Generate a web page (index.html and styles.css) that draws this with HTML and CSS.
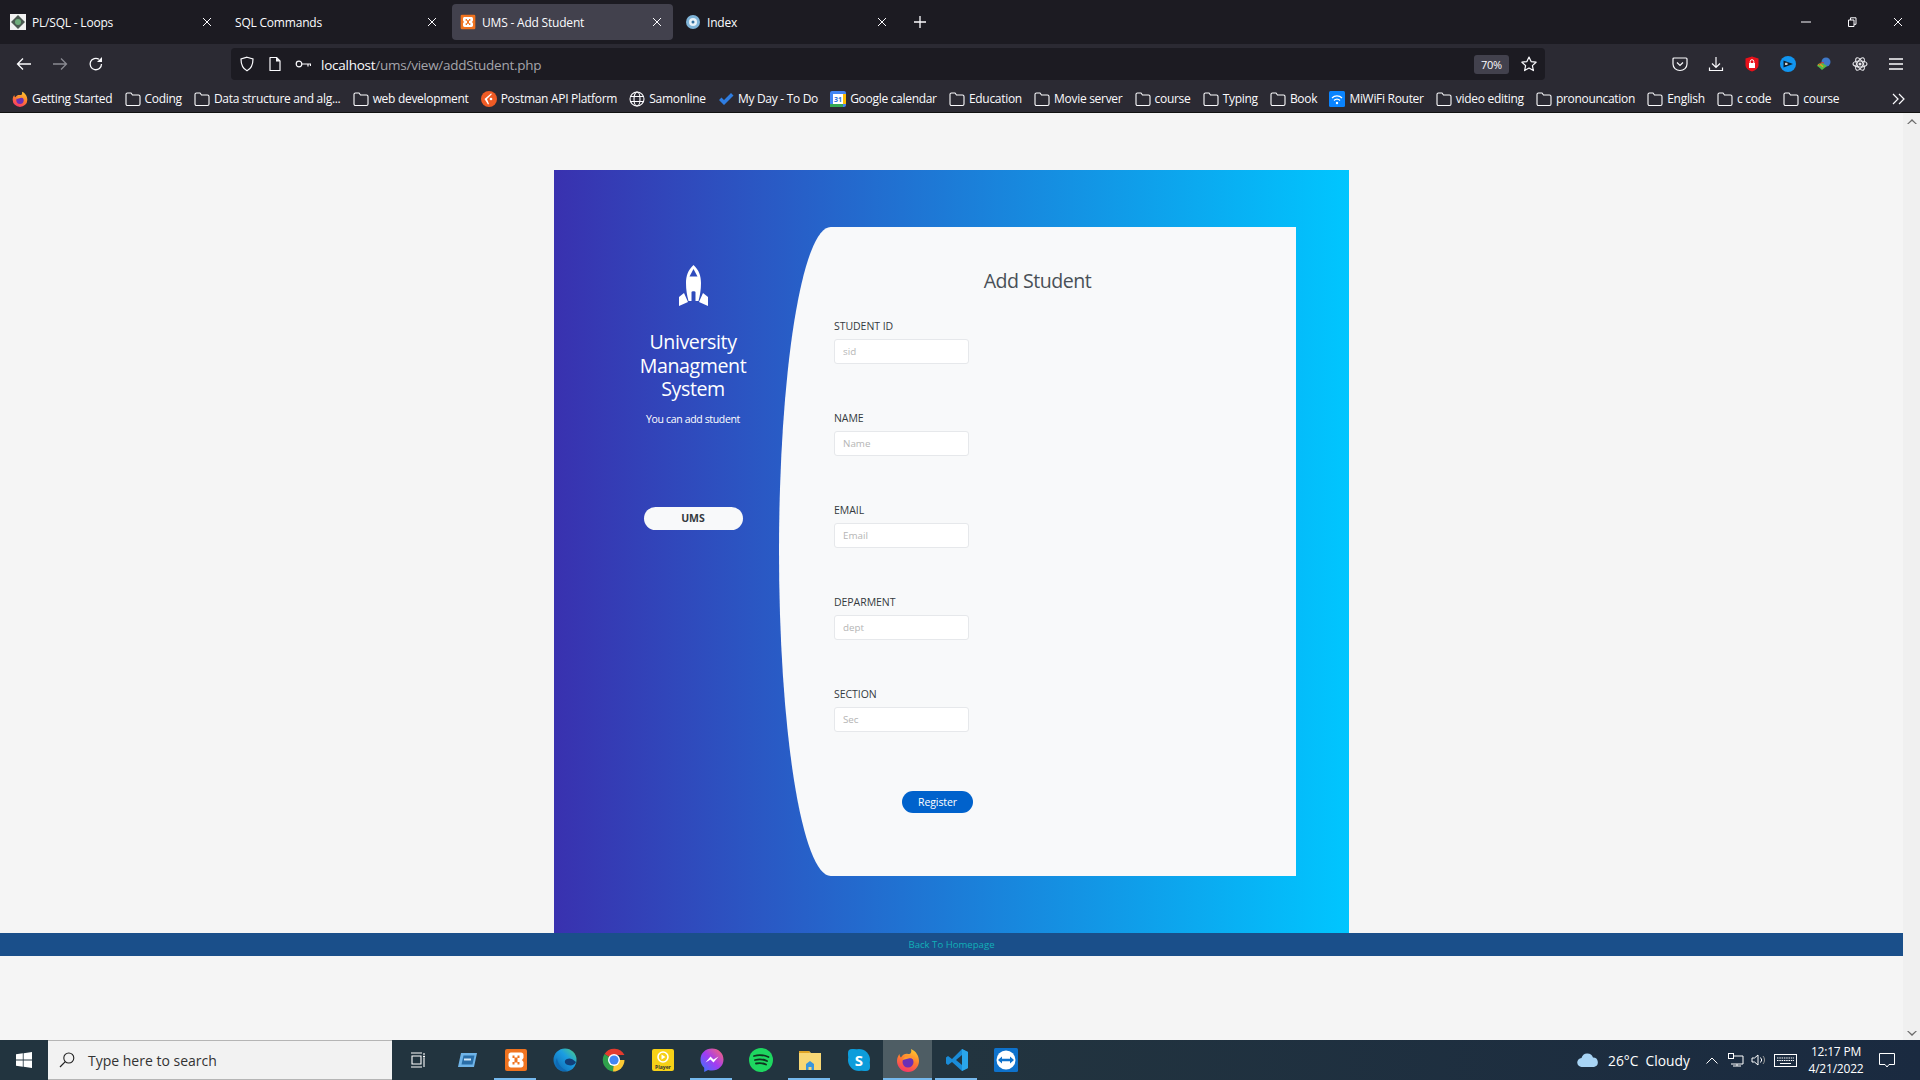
FILE: index.html
```html
<!DOCTYPE html>
<html lang="en">
<head>
    <title>UMS - Add Student</title>
    <link rel="stylesheet" href="styles.css">
</head>
<body>
    <svg class="sprite" width="0" height="0">
        <defs>
            <linearGradient id="gradMsg" x1="0" y1="1" x2="1" y2="0"><stop offset="0" stop-color="#2e7bff"/><stop offset=".5" stop-color="#a33bf2"/><stop offset="1" stop-color="#ff6a6a"/></linearGradient>
            <linearGradient id="gradEdge" x1="0" y1="1" x2="1" y2="0"><stop offset="0" stop-color="#0c5fa8"/><stop offset=".6" stop-color="#1b9de2"/><stop offset="1" stop-color="#52d17c"/></linearGradient>
            <linearGradient id="gradFox" x1=".7" y1="0" x2=".3" y2="1"><stop offset="0" stop-color="#ffc82e"/><stop offset=".5" stop-color="#ff7a30"/><stop offset="1" stop-color="#f5336b"/></linearGradient>
            <symbol id="folder" viewBox="0 0 16 16"><path d="M1 13V3.500C1 2.700 1.600 2 2.500 2H6l1.500 2h6c.8 0 1.500.7 1.500 1.500V13c0 .8-.7 1.500-1.500 1.500h-11C1.600 14.500 1 13.800 1 13z" fill="none" stroke="#fbfbfe" stroke-width="1.100"/></symbol>
            <symbol id="close" viewBox="0 0 10 10"><path d="M1 1l8 8M9 1l-8 8" stroke="#fbfbfe" stroke-width="1" fill="none"/></symbol>
            <symbol id="fox" viewBox="0 0 24 24"><path d="M15 1c5 2 8 7 8 12a11 11 0 1 1-22 0c0-3 1-5 2.500-7 0 2 .8 3 1.500 3.500C7 6 10 5.500 12 6c2 .5 4-1 3-5z" fill="url(#gradFox)"/><circle cx="12" cy="14" r="5.500" fill="#6b2fb5"/><path d="M6.500 12c1-3 4-4.500 7-4 2.500.5 4 2 4.500 4-2-2-4-2-5.500-1.500-2 .5-4 1-6 1.500z" fill="#ff9a2e"/></symbol>
            <symbol id="xampp" viewBox="0 0 24 24"><rect x="1" y="1" width="22" height="22" rx="2" fill="#f0731f"/><path d="M7 4.500h10c1.500 0 2.500 1 2.500 2.500v2.500c0 1-.8 1.800-1.800 2.500.9.700 1.800 1.500 1.800 2.500V17c0 1.500-1 2.500-2.500 2.500H7c-1.500 0-2.500-1-2.500-2.500v-2.500c0-1 .9-1.800 1.800-2.500-1-.7-1.800-1.500-1.800-2.500V7c0-1.500 1-2.500 2.500-2.500z" fill="#fff"/><path d="M8.500 7.500h2v2h3v-2h2v2.500h-2v4h2v2.500h-2v-2h-3v2h-2V14h2v-4h-2z" fill="#f0731f"/></symbol>
        </defs>
    </svg>

    <header class="browser">
        <div class="tabs">
            <div class="tab">
                <svg class="fav" viewBox="0 0 16 16"><rect width="16" height="16" fill="#f2f2f2"/><path d="M8 1l7 7-7 7-7-7z" fill="#4c5a52"/><circle cx="8" cy="8" r="3" fill="#6fae7c"/></svg>
                <span class="tabName">PL/SQL - Loops</span>
                <svg class="tabClose"><use href="#close"/></svg>
            </div>
            <div class="tab noIcon">
                <span class="tabName">SQL Commands</span>
                <svg class="tabClose"><use href="#close"/></svg>
            </div>
            <div class="tab active">
                <svg class="fav"><use href="#xampp"/></svg>
                <span class="tabName">UMS - Add Student</span>
                <svg class="tabClose"><use href="#close"/></svg>
            </div>
            <div class="tab">
                <svg class="fav" viewBox="0 0 16 16"><circle cx="8" cy="8" r="7" fill="#7fb4d8"/><circle cx="8" cy="8" r="4" fill="#e8f2f8"/><circle cx="8" cy="8" r="1.500" fill="#2f6f9f"/></svg>
                <span class="tabName">Index</span>
                <svg class="tabClose"><use href="#close"/></svg>
            </div>
            <svg class="newTab" viewBox="0 0 12 12"><path d="M6 0v12M0 6h12" stroke="#fbfbfe" stroke-width="1.300"/></svg>
            <div class="winBtns">
                <svg viewBox="0 0 10 10"><path d="M0 5h10" stroke="#fbfbfe"/></svg>
                <svg viewBox="0 0 10 10"><path d="M1.500 3h5.500v6.500H1.500zM3.500 3V.8H9v6.500H7" fill="none" stroke="#fbfbfe"/></svg>
                <svg viewBox="0 0 10 10"><use href="#close"/></svg>
            </div>
        </div>

        <div class="toolbar">
            <svg class="navIcon" viewBox="0 0 16 16"><path d="M15 8H1.500M7 2.500L1.500 8 7 13.500" fill="none" stroke="#fbfbfe" stroke-width="1.300"/></svg>
            <svg class="navIcon dim" viewBox="0 0 16 16"><path d="M1 8h13.500M9 2.500L14.500 8 9 13.500" fill="none" stroke="#8a8a92" stroke-width="1.300"/></svg>
            <svg class="navIcon" viewBox="0 0 16 16"><path d="M13.500 8A5.700 5.700 0 1 1 11 3.300" fill="none" stroke="#fbfbfe" stroke-width="1.300"/><path d="M14 1v5H9z" fill="#fbfbfe"/></svg>
            <div class="urlbar">
                <svg class="urlIcon" viewBox="0 0 16 16"><path d="M8 1.200l6 1.800c0 6-1.500 9.500-6 11.800C3.500 12.500 2 9 2 3z" fill="none" stroke="#fbfbfe" stroke-width="1.200"/></svg>
                <svg class="urlIcon" viewBox="0 0 16 16"><path d="M3 1.500h6.500L13 5v9.500H3z" fill="none" stroke="#fbfbfe" stroke-width="1.200" stroke-linejoin="round"/><path d="M9 1.500V5.500h4" fill="#fbfbfe"/></svg>
                <svg class="urlIcon" viewBox="0 0 16 16"><circle cx="4" cy="8" r="2.800" fill="none" stroke="#fbfbfe" stroke-width="1.200"/><path d="M7 8h9M13 8v2.500M15.500 8v2" stroke="#fbfbfe" stroke-width="1.200"/></svg>
                <span class="url">localhost<span class="urlPath">/ums/view/addStudent.php</span></span>
                <span class="zoomPill">70%</span>
                <svg class="star" viewBox="0 0 16 16"><path d="M8 1l2.100 4.600 5 .6-3.700 3.400 1 5L8 12.100l-4.400 2.500 1-5L.9 6.200l5-.6z" fill="none" stroke="#fbfbfe" stroke-width="1.200" stroke-linejoin="round"/></svg>
            </div>
            <div class="addons">
                <svg viewBox="0 0 16 16"><path d="M2 2h12c.6 0 1 .4 1 1v5c0 3.500-3 6.500-7 6.500S1 11.500 1 8V3c0-.6.4-1 1-1z" fill="none" stroke="#fbfbfe" stroke-width="1.200"/><path d="M5 6.500l3 3 3-3" fill="none" stroke="#fbfbfe" stroke-width="1.200"/></svg>
                <svg viewBox="0 0 16 16"><path d="M8 1v10M4 7.500L8 11.500l4-4M1.500 11.500v3h13v-3" fill="none" stroke="#fbfbfe" stroke-width="1.200"/></svg>
                <svg viewBox="0 0 16 16"><path d="M8 .5l6.500 2V9c0 3-3 5.500-6.500 6.500C4.500 14.500 1.500 12 1.500 9V2.500z" fill="#e8111a"/><rect x="5" y="7" width="6" height="5" fill="#fff"/><path d="M6.200 7V5.500a1.800 1.800 0 0 1 3.600 0V7" fill="none" stroke="#fff"/></svg>
                <svg viewBox="0 0 16 16"><circle cx="8" cy="8" r="8" fill="#1195f0"/><path d="M3.500 4.500L13 8l-9.500 3.500z" fill="#10212e"/><rect x="5" y="6.800" width="2.500" height="2.200" fill="#ccc"/></svg>
                <svg viewBox="0 0 16 16"><circle cx="10" cy="6" r="4.500" fill="#3f79c9"/><path d="M1 10c2-4 5-4 7-2l3 2-5 4c-2-2-3-3-5-4z" fill="#54b948"/><path d="M2 9c2-1 4 0 5 2" fill="none" stroke="#e8a21a" stroke-width="1.300"/><path d="M8 7c-2-1-4 0-5 2" fill="none" stroke="#e2332b"/></svg>
                <svg viewBox="0 0 16 16"><g fill="none" stroke="#e4e4e8" stroke-width="1.200"><ellipse cx="8" cy="8" rx="7" ry="3"/><ellipse cx="8" cy="8" rx="7" ry="3" transform="rotate(60 8 8)"/><ellipse cx="8" cy="8" rx="7" ry="3" transform="rotate(120 8 8)"/></g><circle cx="8" cy="8" r="1.500" fill="#e4e4e8"/></svg>
                <svg viewBox="0 0 16 16"><path d="M1 3h14M1 8h14M1 13h14" stroke="#fbfbfe" stroke-width="1.400"/></svg>
            </div>
        </div>

        <nav class="bookmarks">
            <a class="mark"><svg><use href="#fox"/></svg>Getting Started</a>
            <a class="mark"><svg><use href="#folder"/></svg>Coding</a>
            <a class="mark"><svg><use href="#folder"/></svg>Data structure and alg...</a>
            <a class="mark"><svg><use href="#folder"/></svg>web development</a>
            <a class="mark"><svg viewBox="0 0 16 16"><circle cx="8" cy="8" r="8" fill="#ef5b25"/><path d="M11 3L6 8l2 5-1 .5L3.500 8 10 2.500z" fill="#fff"/><circle cx="10" cy="8" r="1.300" fill="#fff"/></svg>Postman API Platform</a>
            <a class="mark"><svg viewBox="0 0 16 16"><g fill="none" stroke="#fbfbfe" stroke-width="1.100"><circle cx="8" cy="8" r="7"/><ellipse cx="8" cy="8" rx="3" ry="7"/><path d="M1.500 5.500h13M1.500 10.500h13"/></g></svg>Samonline</a>
            <a class="mark"><svg viewBox="0 0 16 16"><path d="M1 9l2.500-2.500L6 9l7-7 2.500 2.500L6 14z" fill="#2f7de1"/></svg>My Day - To Do</a>
            <a class="mark"><svg viewBox="0 0 16 16"><rect width="16" height="16" rx="2" fill="#4285f4"/><rect x="3" y="3" width="10" height="10" fill="#fff"/><rect y="13" width="13" height="3" fill="#34a853"/><rect x="13" y="3" width="3" height="10" fill="#fbbc04"/><text x="8" y="11" class="calNum">31</text></svg>Google calendar</a>
            <a class="mark"><svg><use href="#folder"/></svg>Education</a>
            <a class="mark"><svg><use href="#folder"/></svg>Movie server</a>
            <a class="mark"><svg><use href="#folder"/></svg>course</a>
            <a class="mark"><svg><use href="#folder"/></svg>Typing</a>
            <a class="mark"><svg><use href="#folder"/></svg>Book</a>
            <a class="mark"><svg viewBox="0 0 16 16"><rect width="16" height="16" rx="1.500" fill="#0a84ff"/><path d="M3 7a7 7 0 0 1 10 0M5 9.500a4 4 0 0 1 6 0" fill="none" stroke="#fff" stroke-width="1.200"/><circle cx="8" cy="12" r="1.200" fill="#fff"/></svg>MiWiFi Router</a>
            <a class="mark"><svg><use href="#folder"/></svg>video editing</a>
            <a class="mark"><svg><use href="#folder"/></svg>pronouncation</a>
            <a class="mark"><svg><use href="#folder"/></svg>English</a>
            <a class="mark"><svg><use href="#folder"/></svg>c code</a>
            <a class="mark"><svg><use href="#folder"/></svg>course</a>
            <svg class="more" viewBox="0 0 14 12"><path d="M1 1l5 5-5 5M7 1l5 5-5 5" fill="none" stroke="#fbfbfe" stroke-width="1.200"/></svg>
        </nav>
    </header>

    <div class="viewport">
        <main class="page">
            <section class="panel">
                <aside class="intro">
                    <svg class="rocket" viewBox="0 0 29 41"><path fill-rule="evenodd" d="M14.500 0C9 5 7 11 7 18c0 7 1 12 2.500 18h3V27c0-1 4-1 4 0v9h3C21 30 22 25 22 18c0-7-2-13-7.500-18zM14.500 4l-4 7.500h8z" fill="#fff"/><path d="M5 28l-5 4v9l9-4zM24 28l5 4v9l-9-4z" fill="#fff"/></svg>
                    <h3 class="introTitle">University Managment System</h3>
                    <p class="introText">You can add student</p>
                    <a class="umsBtn">UMS</a>
                </aside>
                <div class="card">
                    <h3 class="cardTitle">Add Student</h3>
                    <form class="studentForm">
                        <div class="field">
                            <label>STUDENT ID</label>
                            <input type="text" placeholder="sid">
                        </div>
                        <div class="field">
                            <label>NAME</label>
                            <input type="text" placeholder="Name">
                        </div>
                        <div class="field">
                            <label>EMAIL</label>
                            <input type="text" placeholder="Email">
                        </div>
                        <div class="field">
                            <label>DEPARMENT</label>
                            <input type="text" placeholder="dept">
                        </div>
                        <div class="field">
                            <label>SECTION</label>
                            <input type="text" placeholder="Sec">
                        </div>
                        <button class="registerBtn" type="button">Register</button>
                    </form>
                </div>
            </section>
            <footer class="backBar"><a>Back To Homepage</a></footer>
        </main>
        <div class="scrollbar">
            <svg viewBox="0 0 10 6"><path d="M0 6l5-5 5 5-1.500 0L5 3 1.500 6z" fill="#6b6b6b"/></svg>
            <svg viewBox="0 0 10 6"><path d="M0 0l5 5 5-5-1.500 0L5 3 1.500 0z" fill="#6b6b6b"/></svg>
        </div>
    </div>

    <div class="taskbar">
        <svg class="winLogo" viewBox="0 0 16 16"><path d="M0 2.300l6.800-1v6.300H0zM7.600 1.200L16 0v7.600H7.600zM0 8.400h6.800v6.300l-6.800-1zM7.600 8.400H16V16l-8.400-1.200z" fill="#fff"/></svg>
        <div class="searchBox">
            <svg viewBox="0 0 16 16"><circle cx="9.800" cy="6" r="5" fill="none" stroke="#222" stroke-width="1.100"/><path d="M6.300 9.700L1 15" stroke="#222" stroke-width="1.200"/></svg>
            <span>Type here to search</span>
        </div>
        <div class="taskIcons">
            <div class="taskIcon"><svg class="small" viewBox="0 0 16 16"><path d="M1 1h11M1 15h11M2 4h9v8H2zM14 1v2M14 6v9" fill="none" stroke="#fff" stroke-width="1.100"/><rect x="13" y="3.800" width="2" height="1.600" fill="#fff"/></svg></div>
            <div class="taskIcon"><svg viewBox="0 0 24 24"><path d="M6 5h16l-3 14H3z" fill="#6fb4e8"/><path d="M8.500 7.500h11l-2 9h-11z" fill="#2a6ea8"/><rect x="9" y="10.500" width="7" height="2" fill="#cfe6f7"/></svg></div>
            <div class="taskIcon running"><svg><use href="#xampp"/></svg></div>
            <div class="taskIcon"><svg viewBox="0 0 24 24"><circle cx="12" cy="12" r="11.500" fill="url(#gradEdge)"/><path d="M23 14c-1 3-5 4-8 3-4-1-4-5-1-6 2-1 5-1 9 3z" fill="#123f78"/><path d="M9 23c-5-2-8-8-5-13 1 7 5 10 10 13z" fill="#0f6ab4"/></svg></div>
            <div class="taskIcon"><svg viewBox="0 0 24 24"><path d="M12 12L2.500 6A11.500 11.500 0 0 1 22.500 7H12z" fill="#e33b2e"/><path d="M12 12l-1 11.500A11.500 11.500 0 0 1 2.500 6z" fill="#2fa14c"/><path d="M12 12h10.500A11.500 11.500 0 0 1 11 23.500z" fill="#fcc934"/><circle cx="12" cy="12" r="6" fill="#fff"/><circle cx="12" cy="12" r="4.600" fill="#4285f4"/></svg></div>
            <div class="taskIcon"><svg viewBox="0 0 24 24"><rect x="1" y="1" width="22" height="22" rx="2" fill="#f7d117"/><circle cx="12" cy="9" r="5" fill="none" stroke="#fff" stroke-width="1.600"/><path d="M10.500 6.500l4 2.500-4 2.500z" fill="#fff"/><text x="12" y="20.500" class="playerText">Player</text></svg></div>
            <div class="taskIcon running"><svg viewBox="0 0 24 24"><path d="M12 .5C5.500.5.500 5.200.500 11.500c0 3.300 1.400 6.200 3.700 8.200V24l3.900-2.100c1.200.4 2.500.6 3.900.6 6.500 0 11.500-4.700 11.500-11S18.500.5 12 .5z" fill="url(#gradMsg)"/><path d="M5.500 14.500l5-6 3 3 5-3-5 6-3-3z" fill="#fff"/></svg></div>
            <div class="taskIcon"><svg viewBox="0 0 24 24"><circle cx="12" cy="12" r="12" fill="#1ed760"/><path d="M5 8c5-1.500 10-1 14.500 1M6 12c4-1 8.500-.7 12 1M7 15.500c3.500-.8 7-.5 10 1" fill="none" stroke="#10331f" stroke-width="1.800" stroke-linecap="round"/></svg></div>
            <div class="taskIcon running"><svg viewBox="0 0 24 24"><path d="M1 3h10l2 2h10v17H1z" fill="#f8d775"/><path d="M1 3h10l1 2H1z" fill="#e0a526"/><path d="M8 22v-6l4-3 4 3v6h-2.500v-3h-3v3z" fill="#3a96dd"/></svg></div>
            <div class="taskIcon"><svg viewBox="0 0 24 24"><circle cx="12" cy="12" r="11" fill="#0d9ddb"/><rect x="1" y="1" width="10" height="10" rx="4" fill="#0d9ddb"/><rect x="13" y="13" width="10" height="10" rx="4" fill="#0d9ddb"/><text x="12" y="18" class="skypeText">S</text></svg></div>
            <div class="taskIcon running active"><svg><use href="#fox"/></svg></div>
            <div class="taskIcon running"><svg viewBox="0 0 24 24"><path d="M17 1l6 3v16l-6 3-10-9-4 3-2-1.500V9.500L3 8l4 3z" fill="#1a8cd8"/><path d="M17 7l-6 5 6 5z" fill="#22343f"/><path d="M17 1l6 3v16l-6 3z" fill="#2aa5ea"/></svg></div>
            <div class="taskIcon"><svg viewBox="0 0 24 24"><rect width="24" height="24" rx="1.500" fill="#0e72cc"/><circle cx="12" cy="12" r="9.500" fill="#fff"/><path d="M4 12l4-3.500v2.300h8V8.500l4 3.500-4 3.500v-2.300H8v2.300z" fill="#0e72cc"/></svg></div>
        </div>
        <div class="tray">
            <svg class="cloud" viewBox="0 0 22 14"><path d="M5 14a4.500 4.500 0 0 1-.5-9A6 6 0 0 1 16 4.500 4.800 4.800 0 0 1 17 14z" fill="#a8d4f5"/></svg>
            <span class="weather">26°C&nbsp; Cloudy</span>
            <svg class="trayIcon caret" viewBox="0 0 12 7"><path d="M.5 6.500L6 1l5.500 5.500" fill="none" stroke="#fff"/></svg>
            <svg class="trayIcon net" viewBox="0 0 16 14"><path d="M3 3h12v8H3M9 11v2M5 13h8" fill="none" stroke="#fff"/><rect x=".5" y=".5" width="5" height="5" fill="#1a2a40" stroke="#fff"/></svg>
            <svg class="trayIcon vol" viewBox="0 0 16 14"><path d="M1 5h2.500L7 2v10L3.500 9H1z" fill="none" stroke="#fff"/><path d="M9.500 4.500a3.500 3.500 0 0 1 0 5" fill="none" stroke="#fff"/><path d="M12 3a6 6 0 0 1 0 8" fill="none" stroke="#999"/></svg>
            <svg class="trayIcon kbd" viewBox="0 0 23 13"><rect x=".5" y=".5" width="22" height="12" fill="none" stroke="#fff"/><path d="M3 4h17M3 6.500h17" stroke="#fff" stroke-dasharray="1.500 .8"/><path d="M6 9.500h11" stroke="#fff"/></svg>
            <div class="clock"><span>12:17 PM</span><span>4/21/2022</span></div>
            <svg class="trayIcon notify" viewBox="0 0 16 15"><path d="M.5.500h15v11H10l-2 2.500-2-2.500H.5z" fill="none" stroke="#fff"/></svg>
        </div>
    </div>
</body>
</html>
```

FILE: styles.css
```css
* {
    box-sizing: border-box;
}

body {
    margin: 0;
    height: 100vh;
    display: flex;
    flex-direction: column;
    overflow: hidden;
    background: #f5f5f5;
    font-family: "Open Sans", "Noto Sans", sans-serif;
}

.sprite {
    display: block;
    flex: none;
}

/* browser chrome */
.browser {
    flex: none;
    color: #fbfbfe;
    font-size: 12px;
    letter-spacing: -0.3px;
}

.tabs {
    height: 44px;
    background: #1c1b22;
    display: flex;
    align-items: center;
    padding-left: 2px;
    gap: 4px;
}

.tab {
    width: 221px;
    height: 36px;
    border-radius: 4px;
    display: flex;
    align-items: center;
    padding: 0 11px 0 8px;
    gap: 6px;
    letter-spacing: -0.2px;
}

.tab.active {
    background: #42414d;
}

.fav {
    width: 16px;
    height: 16px;
    flex: none;
}

.tabName {
    flex: 1;
    white-space: nowrap;
}

.tabClose {
    width: 10px;
    height: 10px;
    flex: none;
}

.newTab {
    width: 12px;
    height: 12px;
    margin-left: 12px;
}

.winBtns {
    margin-left: auto;
    display: flex;
    gap: 36px;
    padding-right: 17px;
}

.winBtns svg {
    width: 10px;
    height: 10px;
}

.toolbar {
    height: 44px;
    background: #2b2a33;
    display: flex;
    align-items: center;
    padding: 0 0 4px 16px;
}

.navIcon {
    width: 16px;
    height: 16px;
    margin-right: 20px;
}

.urlbar {
    width: 1314px;
    height: 32px;
    margin-left: 107px;
    background: #1c1b22;
    border-radius: 4px;
    display: flex;
    align-items: center;
    padding-left: 8px;
    font-size: 13.5px;
    letter-spacing: -0.25px;
}

.urlIcon {
    width: 16px;
    height: 16px;
    margin-right: 12px;
}

.url {
    margin-left: -2px;
    padding-top: 1px;
    flex: 1;
}

.urlPath {
    color: #a5a5ab;
}

.zoomPill {
    width: 35px;
    height: 19px;
    border-radius: 3px;
    background: #42414d;
    font-size: 11px;
    text-align: center;
    line-height: 19px;
}

.star {
    width: 16px;
    height: 16px;
    margin: 0 8px 0 12px;
}

.addons {
    display: flex;
    margin-left: 127px;
    gap: 20px;
}

.addons svg {
    width: 16px;
    height: 16px;
}

.bookmarks {
    height: 25px;
    background: #2b2a33;
    border-bottom: 1px solid #111;
    display: flex;
    align-items: center;
    padding: 0 14px 3px 12px;
    gap: 12.2px;
}

.mark {
    display: flex;
    align-items: center;
    gap: 4px;
    white-space: nowrap;
}

.mark svg {
    width: 16px;
    height: 16px;
    flex: none;
}

.calNum {
    font-size: 7px;
    font-weight: 700;
    fill: #2a6fdb;
    text-anchor: middle;
    letter-spacing: 0;
}

.more {
    width: 14px;
    height: 12px;
    margin-left: auto;
}

/* page */
.viewport {
    flex: 1;
    display: flex;
    min-height: 0;
}

.page {
    flex: 1;
    padding-top: 57px;
}

.scrollbar {
    width: 17px;
    background: #f0f0f0;
    display: flex;
    flex-direction: column;
    justify-content: space-between;
    align-items: center;
    padding: 5px 0 3px;
}

.scrollbar svg {
    width: 10px;
    height: 6px;
}

.panel {
    width: 795px;
    height: 763px;
    margin: 0 auto;
    display: flex;
    align-items: flex-start;
    background: linear-gradient(to right, #3931af, #00c6ff);
}

.intro {
    width: 225px;
    flex: none;
    padding: 95px 0 0 53px;
    display: flex;
    flex-direction: column;
    align-items: center;
    text-align: center;
    color: #fff;
}

.rocket {
    width: 29px;
    height: 41px;
}

.introTitle {
    margin: 24px 0 0;
    font-size: 19.6px;
    font-weight: 400;
    line-height: 23.5px;
    letter-spacing: -0.4px;
    width: 110px;
}

.introText {
    margin: 10px 0 0;
    font-size: 10.5px;
    line-height: 17px;
    letter-spacing: -0.35px;
}

.umsBtn {
    display: block;
    width: 99px;
    height: 23px;
    margin-top: 79px;
    border-radius: 17px;
    background: #f8f9fa;
    color: #343a40;
    font-size: 10.5px;
    font-weight: 700;
    line-height: 23px;
}

.card {
    width: 517px;
    height: 649px;
    margin-top: 57px;
    padding-top: 42px;
    background: #f8f9fa;
    border-radius: 10% 0 0 10% / 50% 0 0 50%;
}

.cardTitle {
    margin: 0 0 26px;
    font-size: 19.6px;
    font-weight: 400;
    line-height: 23.5px;
    letter-spacing: -0.5px;
    color: #495057;
    text-align: center;
}

.studentForm {
    padding-left: 55px;
}

.field {
    margin-bottom: 47px;
}

.field label {
    display: block;
    height: 15px;
    margin-bottom: 5px;
    font-size: 10.5px;
    line-height: 15px;
    letter-spacing: -0.05px;
    color: #343a40;
}

.field input {
    display: block;
    width: 135px;
    height: 25px;
    padding: 1px 8px 0;
    background: #fff;
    border: 1px solid #e6e8eb;
    border-radius: 3px;
    font-family: inherit;
    font-size: 9.8px;
    outline: none;
}

.field input::placeholder {
    color: #b5b5b5;
    opacity: 1;
}

.registerBtn {
    display: block;
    width: 71px;
    height: 22px;
    margin: 59px 0 0 68px;
    padding: 0;
    border: none;
    border-radius: 11px;
    background: #0062cc;
    color: #fff;
    font-family: inherit;
    font-size: 10.5px;
    letter-spacing: -0.1px;
}

.backBar {
    height: 23px;
    background: #1a4f8a;
    text-align: center;
    font-size: 9.6px;
    line-height: 24px;
    color: #12b0b8;
}

/* windows taskbar */
.taskbar {
    flex: none;
    height: 40px;
    display: flex;
    align-items: center;
    background: linear-gradient(to right, #22343f, #22343f 50%, #1a2a40);
    color: #fff;
}

.winLogo {
    width: 16px;
    height: 16px;
    margin: 0 16px;
}

.searchBox {
    width: 344px;
    height: 40px;
    display: flex;
    align-items: center;
    gap: 13px;
    padding-left: 11px;
    background: #f2f2f2;
    border-top: 1px solid #b5b5b5;
    border-bottom: 1px solid #b5b5b5;
    color: #333;
    font-size: 14px;
}

.searchBox svg {
    width: 16px;
    height: 16px;
}

.taskIcons {
    display: flex;
    margin-left: 1px;
}

.taskIcon {
    width: 49px;
    height: 40px;
    display: flex;
    align-items: center;
    justify-content: center;
    border-bottom: 2px solid transparent;
    padding-top: 1px;
}

.taskIcon svg {
    width: 24px;
    height: 24px;
}

.taskIcon svg.small {
    width: 16px;
    height: 16px;
}

.taskIcon.running {
    border-image: linear-gradient(to right, transparent 4px, #76b9ed 4px, #76b9ed 44px, transparent 44px) 1;
}

.taskIcon.active {
    background: #4e5d64;
    border-image: none;
    border-bottom-color: #76b9ed;
}

.playerText {
    font-size: 5px;
    font-weight: 700;
    fill: #333;
    text-anchor: middle;
}

.skypeText {
    font-size: 15px;
    font-weight: 700;
    fill: #fff;
    text-anchor: middle;
}

.tray {
    margin-left: auto;
    display: flex;
    align-items: center;
    font-size: 13.8px;
    padding-right: 25px;
}

.cloud {
    width: 22px;
    height: 14px;
}

.weather {
    margin-left: 9px;
    width: 84px;
    white-space: nowrap;
}

.trayIcon {
    flex: none;
}

.caret {
    width: 12px;
    height: 7px;
    margin-left: 14px;
}

.net {
    width: 16px;
    height: 14px;
    margin-left: 10px;
}

.vol {
    width: 16px;
    height: 14px;
    margin-left: 7px;
}

.kbd {
    width: 23px;
    height: 13px;
    margin-left: 7px;
}

.clock {
    width: 68px;
    margin-left: 5px;
    display: flex;
    flex-direction: column;
    align-items: center;
    font-size: 12px;
    line-height: 17px;
    letter-spacing: -0.2px;
}

.notify {
    width: 16px;
    height: 15px;
    margin-left: 9px;
}
```
